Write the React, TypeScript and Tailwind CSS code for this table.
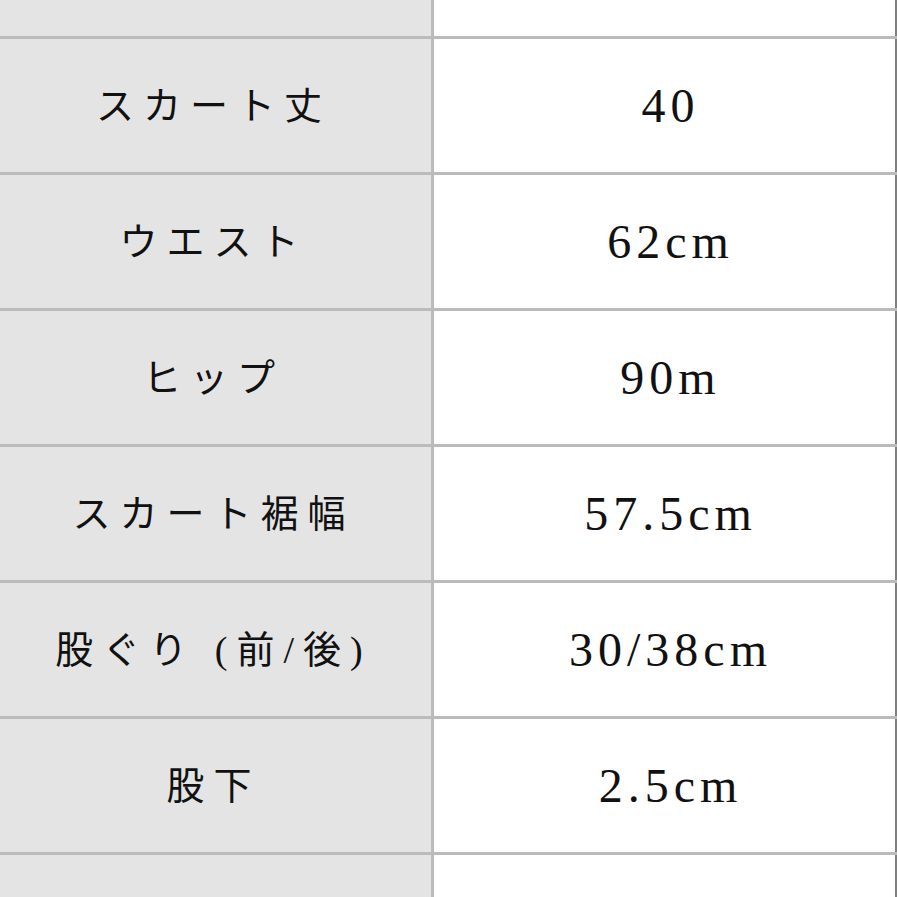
const rows = [
  { label: 'スカート丈', value: '40' },
  { label: 'ウエスト', value: '62cm' },
  { label: 'ヒップ', value: '90m' },
  { label: 'スカート裾幅', value: '57.5cm' },
  { label: '股ぐり (前/後)', value: '30/38cm' },
  { label: '股下', value: '2.5cm' },
]

function Row({ label, value, top }: { label: string; value: string; top?: boolean }) {
  return (
    <div
      className={
        top
          ? 'flex h-[36px] shrink-0'
          : 'flex h-[136px] shrink-0 border-t-[3px] border-[#bbbbbb]'
      }
    >
      <div className="flex w-[434px] items-center justify-center border-r-[3px] border-[#bbbbbb] bg-[#e4e4e4] pr-[4px]">
        <span className="font-['Liberation_Serif','Noto_Sans_CJK_JP',serif] text-[38px] leading-none tracking-[9px] text-[#111111]">
          {label}
        </span>
      </div>
      <div className="flex flex-1 items-center justify-center border-r-2 border-[#808080] bg-white pl-[12px]">
        <span className="font-['Liberation_Serif',serif] text-[48px] leading-none tracking-[5px] text-[#111111]">
          {value}
        </span>
      </div>
    </div>
  )
}

export default function App() {
  return (
    <div className="flex h-[897px] w-[897px] flex-col overflow-hidden bg-white">
      <Row label="" value="" top />
      {rows.map((r) => (
        <Row key={r.label} label={r.label} value={r.value} />
      ))}
      <Row label="" value="" />
    </div>
  )
}
